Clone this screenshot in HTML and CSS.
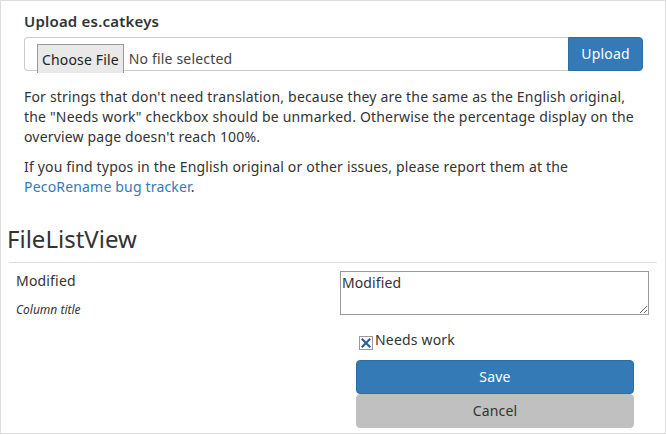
FILE: index.html
```html
<!DOCTYPE html>
<html>
<head>
<meta charset="utf-8">
<link rel="stylesheet" href="styles.css">
</head>
<body>
<div class="frame">
  <section class="upload">
    <h4 class="upload-title">Upload es.catkeys</h4>
    <div class="input-group">
      <div class="file-field">
        <span class="file-btn">Choose File</span>
        <span class="file-status">No file selected</span>
      </div>
      <button class="btn btn-upload">Upload</button>
    </div>
    <p class="note">For strings that don't need translation, because they are the same as the English original, the "Needs work" checkbox should be unmarked. Otherwise the percentage display on the overview page doesn't reach 100%.</p>
    <p class="note">If you find typos in the English original or other issues, please report them at the <a class="link" href="#">PecoRename bug tracker</a>.</p>
  </section>
  <section class="context">
    <h2 class="context-title">FileListView</h2>
    <div class="entry">
      <div class="entry-left">
        <div class="entry-label">Modified</div>
        <div class="entry-desc">Column title</div>
      </div>
      <div class="entry-right">
        <textarea class="translation">Modified</textarea>
        <label class="check">
          <span class="check-box"><svg width="12" height="12" viewBox="0 0 12 12"><path d="M2.5 2.5 L9.5 9.5 M9.5 2.5 L2.5 9.5" stroke="#2f5f98" stroke-width="2.2" stroke-linecap="square"/></svg></span>
          <span class="check-text">Needs work</span>
        </label>
        <div class="actions">
          <button class="btn btn-save">Save</button>
          <button class="btn btn-cancel">Cancel</button>
        </div>
      </div>
    </div>
  </section>
</div>
</body>
</html>
```

FILE: styles.css
```css
* { box-sizing: border-box; }
html, body { margin: 0; padding: 0; background: #fff; }
body {
  font-family: "Noto Sans", "Open Sans", sans-serif;
  font-size: 14px;
  line-height: 20px;
  letter-spacing: 0.18px;
  color: #333;
}
.frame {
  width: 666px;
  height: 434px;
  border: 1px solid #ddd;
}
.upload {
  padding: 10px 23px 0 23px;
}
.upload-title {
  margin: 0 0 6px 0;
  font-size: 15px;
  font-weight: 600;
  line-height: 20px;
  letter-spacing: 0.2px;
}
.input-group {
  display: flex;
  width: 619px;
  height: 34px;
  margin-bottom: 16px;
}
.file-field {
  flex: 1;
  display: flex;
  align-items: flex-start;
  border: 1px solid #ccc;
  border-right: none;
  border-radius: 4px 0 0 4px;
  padding: 6px 0 0 12px;
  overflow: visible;
  height: 34px;
}
.file-btn {
  display: block;
  height: 29px;
  padding: 5px 4px 0 4px;
  background: #e9e9e9;
  border: 1px solid #999;
  border-bottom: none;
  font-size: 14px;
  line-height: 20px;
  color: #222;
  letter-spacing: 0.15px;
}
.file-status {
  padding: 5px 0 0 5px;
  color: #444;
}
.btn {
  font-family: "Noto Sans", "Open Sans", sans-serif;
  font-size: 14px;
  line-height: 20px;
  letter-spacing: 0.18px;
  border: 1px solid transparent;
  cursor: pointer;
  padding: 6px 12px;
}
.btn-upload {
  width: 75px;
  height: 34px;
  background: #337ab7;
  border-color: #2e6da4;
  color: #fff;
  border-radius: 0 4px 4px 0;
}
.note {
  margin: 0 0 10px 0;
}
.link { color: #337ab7; text-decoration: none; }
.context {
  padding: 0 8px;
}
.context-title {
  margin: 0;
  padding: 17px 0 8px 0;
  font-size: 24px;
  font-weight: 400;
  line-height: 30px;
  letter-spacing: 0;
  text-indent: -2px;
  border-bottom: 1px solid #ddd;
}
.entry {
  display: flex;
  padding-top: 8px;
}
.entry-left {
  width: 324px;
  padding: 0 7px;
}
.entry-label {
  line-height: 20px;
}
.entry-desc {
  font-size: 12px;
  font-style: italic;
  margin-top: 10px;
  line-height: 18px;
  letter-spacing: 0;
}
.entry-right {
  flex: 1;
  padding: 0 8px 0 8px;
  display: flex;
  flex-direction: column;
}
.translation {
  display: block;
  width: 309px;
  height: 44px;
  margin: 0 0 0 1px;
  border: 1px solid #999;
  padding: 1px 1px;
  font-family: "Noto Sans", "Open Sans", sans-serif;
  font-size: 14px;
  line-height: 20px;
  letter-spacing: 0.1px;
  color: #333;
  resize: vertical;
}
.check {
  display: flex;
  align-items: center;
  margin: 15px 0 0 20px;
  height: 20px;
}
.check-box {
  width: 14px;
  height: 14px;
  border: 1px solid #999;
  background: #fff;
  display: flex;
  align-items: center;
  justify-content: center;
  margin-top: 5px;
  margin-right: 2px;
}
.check-box svg { display: block; }
.actions {
  display: flex;
  flex-direction: column;
  margin: 10px 0 0 17px;
  width: 278px;
}
.btn-save {
  height: 34px;
  background: #337ab7;
  border-color: #2e6da4;
  color: #fff;
  border-radius: 4px;
}
.btn-cancel {
  height: 34px;
  background: #c0c0c0;
  border-color: #c0c0c0;
  color: #333;
  border-radius: 4px;
}
```
